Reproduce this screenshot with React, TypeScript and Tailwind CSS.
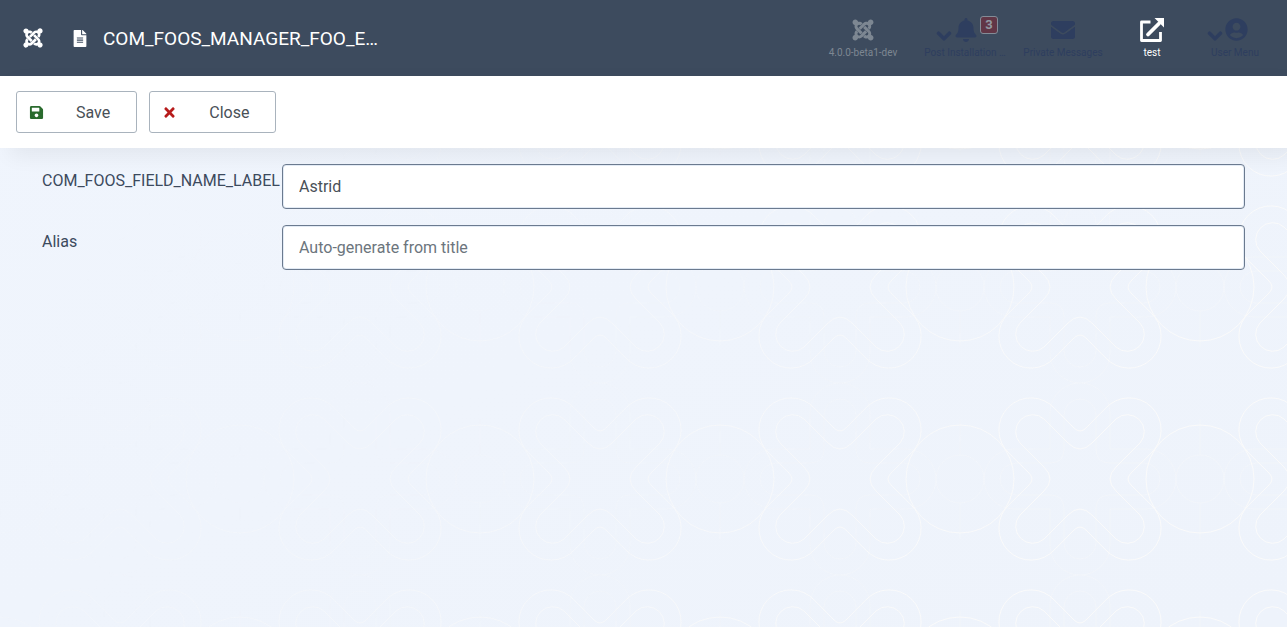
import type { ReactNode } from "react";
import {
  FaBell,
  FaChevronDown,
  FaEnvelope,
  FaFileAlt,
  FaJoomla,
  FaSave,
  FaTimes,
  FaUserCircle,
} from "react-icons/fa";

const OUTER_LOBES =
  "M-25.400 -70.600L-6 -51Q0 -45 6 -51L25.400 -70.600A32 32 0 1 1 70.600 -25.400L51 -6Q45 0 51 6L70.600 25.400A32 32 0 1 1 25.400 70.600L6 51Q0 45 -6 51L-25.400 70.600A32 32 0 1 1 -70.600 25.400L-51 6Q-45 0 -51 -6L-70.600 -25.400A32 32 0 1 1 -25.400 -70.600Z";
const INNER_LOBES =
  "M-36 -60L-12 -36Q0 -24 12 -36L36 -60A17 17 0 0 1 60 -36L36 -12Q24 0 36 12L60 36A17 17 0 0 1 36 60L12 36Q0 24 -12 36L-36 60A17 17 0 0 1 -60 36L-36 12Q-24 0 -36 -12L-60 -36A17 17 0 0 1 -36 -60Z";
const OUTER_CROSS =
  "M-30 -30V-66A30 30 0 0 1 30 -66V-30H66A30 30 0 0 1 66 30H30V66A30 30 0 0 1 -30 66V30H-66A30 30 0 0 1 -66 -30Z";
const INNER_CROSS =
  "M-16 -30V-64A16 16 0 0 1 16 -64V-30Q16 -16 30 -16H64A16 16 0 0 1 64 16H30Q16 16 16 30V64A16 16 0 0 1 -16 64V30Q-16 16 -30 16H-64A16 16 0 0 1 -64 -16H-30Q-16 -16 -16 -30Z";

function Backdrop() {
  return (
    <svg aria-hidden="true" className="absolute inset-0 -z-10 h-full w-full">
      <defs>
        <linearGradient id="fade" x1="0" y1="0" x2="1" y2="0.4">
          <stop offset="0.2" stopColor="#fff" stopOpacity="0" />
          <stop offset="1" stopColor="#fff" stopOpacity="1" />
        </linearGradient>
        <mask id="fade-mask">
          <rect width="100%" height="100%" fill="url(#fade)" />
        </mask>
        <pattern id="tile" width="240" height="192" x="0" y="191" patternUnits="userSpaceOnUse">
          {[0, 240].map((x) => (
            <g key={x} transform={`translate(${x - 120} 96)`} fill="none" stroke="#fafafa">
              <path d={OUTER_LOBES} />
              <path d={INNER_LOBES} />
              <g strokeWidth="1" opacity="0.35">
                <path d={OUTER_CROSS} />
                <path d={INNER_CROSS} />
                <circle cx="120" r="24" />
                <path d="M120 -60V-24M120 24V60" />
              </g>
              <circle cx="120" r="54" />
            </g>
          ))}
        </pattern>
      </defs>
      <rect width="100%" height="100%" fill="url(#tile)" mask="url(#fade-mask)" />
    </svg>
  );
}

function StatusItem({ label, className, children }: { label: string; className: string; children: ReactNode }) {
  return (
    <a href="#" className={`flex flex-col items-center ${className}`}>
      <span className="flex h-6 items-center">{children}</span>
      <span className="mt-[3px] text-center text-[10px] leading-4 whitespace-nowrap">{label}</span>
    </a>
  );
}

function ToolbarButton({ label, icon }: { label: string; icon: ReactNode }) {
  return (
    <button
      type="button"
      className="flex h-[42px] items-center rounded-[3px] border border-[#a9b3bd] bg-white pr-[26px] pl-3 text-[#495057]"
    >
      <span className="flex w-[47px] text-[15px]">{icon}</span>
      <span className="pt-0.5">{label}</span>
    </button>
  );
}

function Field({ id, label, value, placeholder }: { id: string; label: string; value?: string; placeholder?: string }) {
  return (
    <div className="flex items-start">
      <label htmlFor={id} className="w-60 shrink-0 pt-[5px] whitespace-nowrap text-[#3c4a5d]">
        {label}
      </label>
      <input
        id={id}
        type="text"
        defaultValue={value}
        placeholder={placeholder}
        className="h-[45px] min-w-0 flex-1 rounded border border-[#6b7a8f] bg-white px-4 text-[#495057] shadow-[inset_0_0_0_1px_#e3ebf5] outline-none placeholder:text-[#6c757d]"
      />
    </div>
  );
}

export default function App() {
  return (
    <div className="relative isolate min-h-screen bg-linear-to-br from-[#f0f5fd] to-[#eef3fb] font-[Roboto,sans-serif] text-base">
      <Backdrop />
      <header className="flex h-[76px] items-center bg-[#3d4b5e] text-white">
        <a href="#" aria-label="Control panel" className="ml-[22px] text-[22px]">
          <FaJoomla />
        </a>
        <h1 className="ml-7 flex items-center text-[19px]">
          <FaFileAlt className="w-4 text-[17px]" />
          <span className="ml-[15px] pt-0.5 whitespace-nowrap">COM_FOOS_MANAGER_FOO_E…</span>
        </h1>
        <nav aria-label="Status" className="mr-3 ml-auto flex items-start pt-0.5">
          <StatusItem label="4.0.0-beta1-dev" className="w-[76px] text-[#7d8792]">
            <FaJoomla className="text-[24px]" />
          </StatusItem>
          <StatusItem label="Post Installation …" className="ml-[22px] w-[84px] text-[#2e3e5f]">
            <span className="flex items-center gap-0.5 pl-1">
              <FaChevronDown className="mt-3 text-[16px]" stroke="currentColor" strokeWidth="36" />
              <FaBell className="text-[24px]" />
              <span className="-mt-2.5 flex h-[18px] w-[18px] items-center justify-center rounded-[3px] border border-[#838c97] bg-[#613646] text-[13px] font-bold text-[#9299a2]">
                3
              </span>
            </span>
          </StatusItem>
          <StatusItem label="Private Messages" className="ml-[14px] w-[84px] text-[#2e3e5f]">
            <FaEnvelope className="text-[24px]" />
          </StatusItem>
          <StatusItem label="test" className="ml-[7px] w-20 text-white">
            <svg viewBox="0 0 24 24" className="h-6 w-6" fill="none" stroke="currentColor" strokeWidth="2.8" strokeLinejoin="round">
              <path d="M10.500 4H1.500V22.500H20.500V14" />
              <path d="M8 16.500L19 5.500" strokeWidth="3.800" strokeLinecap="round" />
              <path d="M14.500 0H24V9.500Z" fill="currentColor" stroke="none" />
            </svg>
          </StatusItem>
          <StatusItem label="User Menu" className="ml-[3px] w-20 text-[#2e3e5f]">
            <span className="flex items-center gap-0.5 pr-4">
              <FaChevronDown className="mt-3 text-[16px]" stroke="currentColor" strokeWidth="36" />
              <FaUserCircle className="text-[23px]" />
            </span>
          </StatusItem>
        </nav>
      </header>
      <div role="toolbar" aria-label="Toolbar" className="flex h-[72px] items-center gap-3 bg-white px-4 shadow-[10px_8px_20px_rgba(0,0,0,0.06)]">
        <ToolbarButton label="Save" icon={<FaSave className="text-[#2a6b2e]" />} />
        <ToolbarButton label="Close" icon={<FaTimes className="text-[#b71c1c]" />} />
      </div>
      <form className="flex flex-col gap-4 px-[42px] py-4">
        <Field id="name" label="COM_FOOS_FIELD_NAME_LABEL" value="Astrid" />
        <Field id="alias" label="Alias" placeholder="Auto-generate from title" />
      </form>
    </div>
  );
}
